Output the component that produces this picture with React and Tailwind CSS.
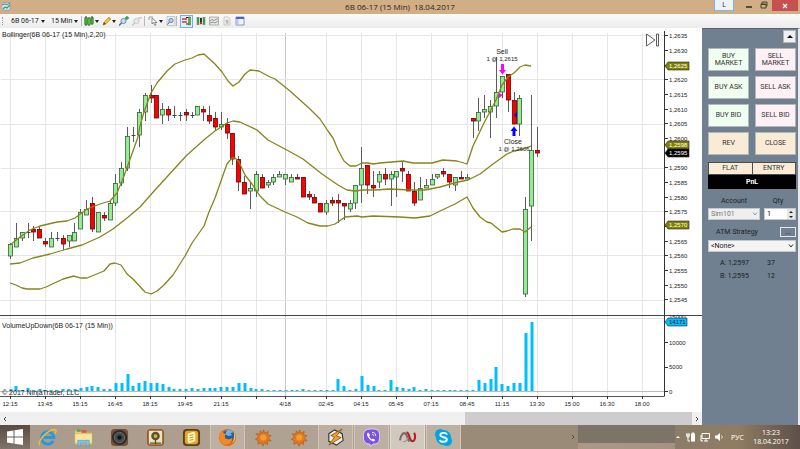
import React from "react";

// [high, body top, body bottom, low, direction] in chart units
const candles = [
  [243, 244, 256, 259, "u"], [223, 238, 247, 247, "u"], [232, 232, 238, 241, "u"], [223, 232, 232, 238, "d"],
  [226, 229, 232, 241, "d"], [226, 229, 238, 238, "d"], [238, 241, 244, 247, "d"], [232, 238, 247, 247, "u"],
  [232, 238, 238, 241, "d"], [235, 238, 244, 250, "d"], [235, 235, 241, 247, "u"], [223, 232, 241, 241, "u"],
  [209, 212, 229, 229, "u"], [200, 209, 215, 215, "u"], [197, 203, 229, 232, "d"], [212, 212, 232, 232, "u"],
  [212, 215, 218, 221, "d"], [200, 203, 220, 220, "u"], [174, 183, 203, 206, "u"], [162, 168, 183, 186, "u"],
  [127, 136, 168, 171, "u"], [127, 135, 135, 142, "d"], [109, 112, 135, 147, "u"], [93, 95, 112, 121, "u"],
  [85, 95, 98, 103, "d"], [95, 95, 118, 118, "d"], [103, 109, 115, 124, "u"], [106, 109, 115, 121, "d"],
  [106, 115, 115, 118, "d"], [112, 115, 115, 121, "d"], [109, 112, 115, 121, "d"], [112, 115, 115, 118, "d"],
  [106, 106, 115, 115, "u"], [106, 109, 112, 121, "d"], [106, 115, 121, 124, "d"], [112, 118, 127, 130, "d"],
  [112, 124, 127, 130, "u"], [118, 124, 133, 139, "d"], [133, 133, 159, 165, "d"], [156, 159, 182, 191, "d"],
  [176, 182, 194, 194, "d"], [182, 188, 191, 209, "u"], [171, 174, 191, 197, "u"], [174, 177, 188, 188, "d"],
  [180, 182, 185, 188, "u"], [174, 177, 182, 185, "u"], [171, 174, 177, 177, "u"], [174, 174, 179, 185, "u"],
  [174, 177, 182, 182, "u"], [174, 177, 179, 179, "d"], [177, 177, 197, 197, "d"], [191, 194, 197, 200, "d"],
  [194, 197, 203, 203, "d"], [203, 203, 212, 212, "d"], [200, 203, 212, 215, "u"], [197, 200, 203, 206, "d"],
  [194, 200, 203, 223, "d"], [203, 203, 206, 220, "d"], [200, 203, 209, 212, "u"], [185, 185, 203, 209, "u"],
  [147, 168, 185, 203, "u"], [165, 165, 185, 194, "d"], [171, 185, 188, 197, "d"], [171, 174, 182, 188, "u"],
  [168, 174, 179, 185, "d"], [171, 174, 179, 206, "u"], [171, 171, 177, 197, "u"], [162, 168, 171, 182, "d"],
  [171, 174, 191, 191, "d"], [182, 191, 203, 206, "d"], [177, 188, 200, 200, "u"], [179, 185, 188, 188, "u"],
  [174, 179, 185, 185, "u"], [174, 174, 177, 179, "u"], [168, 171, 174, 177, "d"], [174, 174, 182, 188, "d"],
  [177, 177, 185, 191, "u"], [171, 177, 179, 179, "d"], [174, 177, 179, 179, "u"], [118, 118, 121, 138, "d"],
  [98, 112, 121, 131, "u"], [95, 109, 112, 118, "u"], [100, 106, 112, 138, "u"], [57, 92, 106, 118, "u"],
  [76, 76, 92, 98, "u"], [74, 74, 100, 112, "d"], [92, 100, 124, 124, "d"], [95, 98, 124, 136, "u"],
  [197, 209, 294, 297, "u"], [95, 150, 206, 241, "u"], [127, 150, 153, 157, "d"],
];

const volumes = [
  2, 5, 1, 3, 1, 2, 1, 1, 1, 2, 2, 2, 3, 4, 5, 4, 2, 2, 8, 8, 17, 5, 8, 10, 8, 8, 7, 4, 2, 2, 2, 3, 2, 3, 3, 3,
  4, 4, 4, 8, 8, 3, 2, 2, 1, 1, 1, 1, 1, 1, 2, 1, 1, 1, 1, 1, 12, 5, 1, 2, 15, 6, 5, 1, 1, 11, 4, 3, 2, 4,
  1, 2, 1, 1, 1, 1, 1, 1, 1, 1, 11, 8, 12, 24, 7, 5, 8, 8, 58, 69,
];

const upperBand =
  "10,245 20,237 30,230 40,226 57,222 67,221 75,218 87,209 100,204 110,201 117,193 124,176 133,151 138,137 140,126 144,112 151,93 157,83 167,71 175,64 185,60 192,58 198,55 204,54 215,64 222,72 228,81 233,86 239,82 245,74 250,70 259,71 270,77 275,79 290,91 310,109 320,119 328,131 333,138 338,150 344,161 350,166 356,166 362,163 368,163 373,164 380,163 403,161 413,163 432,163 443,160 457,161 467,164 473,146 483,125 496,100 502,85 508,77 514,73 520,67 525,65 531,66";
const middleBand =
  "10,264 20,263 33,258 50,254 67,249 82,245 100,237 113,229 127,218 140,207 155,190 187,155 205,139 215,131 227,123 233,121 240,122 257,130 268,140 285,149 303,159 322,174 338,185 347,190 355,191 363,190 375,190 390,189 410,190 425,190 440,187 458,182 468,180 480,174 493,164 507,154 514,151 523,149 531,146";
const lowerBand =
  "10,283 16,285 22,288 27,289 40,289 46,287 63,279 74,276 81,278 87,278 104,271 110,264 115,263 121,265 127,274 133,279 145,292 151,294 157,291 164,285 173,275 185,256 192,243 204,226 209,212 215,198 222,178 227,164 232,158 235,158 239,162 245,175 252,184 260,196 268,204 285,212 297,217 308,223 320,226 328,226 335,224 345,217 357,216 362,217 373,216 400,217 415,218 430,216 440,211 455,204 467,197 473,208 480,217 487,222 491,223 502,232 507,231 513,229 520,229 525,232 531,227";

const times = [
  [10, "12:15"], [45, "13:45"], [80, "15:15"], [115, "16:45"], [150, "18:15"], [185, "19:45"], [221, "21:15"],
  [256, ""], [285, "4/18"], [326, "02:45"], [361, "04:15"], [396, "05:45"], [431, "07:15"], [467, "08:45"],
  [502, "11:15"], [537, "13:30"], [572, "15:00"], [607, "16:30"], [642, "18:00"],
];

// empty entries sit under a price tag
const prices = [
  "1,2635", "1,2630", "", "1,2620", "1,2615", "1,2610", "1,2605", "1,2600", "", "1,2590",
  "1,2585", "1,2580", "1,2575", "", "1,2565", "1,2560", "1,2555", "1,2550", "1,2545",
];

const barX = (i) => 10.5 + i * 5.855;
const priceY = (i) => 35.7 + i * 14.68;

function PriceTag({ y, fill, color, children, width = 24 }) {
  return (
    <g>
      <path d={`M665 ${y}l3-4h${width - 3}v8h-${width - 3}z`} fill={fill} stroke="#222" strokeWidth="0.6" />
      <text x="669" y={y + 2} fill={color}>{children}</text>
    </g>
  );
}

function Chart() {
  return (
    <svg viewBox="0 28 702 384" className="block w-full bg-white font-['Liberation_Sans',sans-serif] text-[6px]" fill="#222">
      <g stroke="#e6e6e6">
        {times.map(([x]) => (
          <path key={x} d={`M${x + 0.5} 33V396`} stroke={x === 285 ? "#c9c9c9" : "#e6e6e6"} />
        ))}
        {[35.5, 79.5, 124.5, 168.5, 211.5, 255.5, 300.5, 318.5].map((y) => (
          <path key={y} d={`M1 ${y}H664`} />
        ))}
      </g>
      <path d="M0 391.5H664" stroke="#bcbcbc" />

      {volumes.map((v, i) => (
        <rect key={i} x={Math.round(barX(i)) - 1.5} y={391 - v} width="3" height={v} fill="#00bfff" />
      ))}

      {candles.map(([high, top, bottom, low, dir], i) => {
        const x = Math.floor(barX(i)) + 0.5;
        return (
          <g key={i} stroke="#444">
            <path d={`M${x} ${high}V${low}`} stroke="#5c5c5c" />
            {top === bottom ? (
              <path d={`M${x - 2} ${top + 0.5}h4`} />
            ) : (
              <rect
                x={x - 2}
                y={top + 0.5}
                width="4"
                height={bottom - top - 0.5}
                fill={dir === "u" ? "#90ee90" : "#ff0000"}
                stroke={dir === "u" ? "#3c5c3c" : "#6c0000"}
                strokeWidth="0.8"
              />
            )}
          </g>
        );
      })}

      <g fill="none" stroke="#85851a" strokeWidth="1.3" strokeLinejoin="round">
        <polyline points={upperBand} />
        <polyline points={middleBand} />
        <polyline points={lowerBand} />
      </g>

      {/* executions */}
      <path d="M501 64h3v6h2l-3.5 4.500-3.5-4.500h2z" fill="#f0f" />
      <path d="M499 93l4 2-4 3z" fill="#f0f" />
      <path d="M512.500 136v-5h-2l3.500-4.500 3.500 4.500h-2v5z" fill="#00f" />
      <path d="M517 112v6l-3-3z" fill="#00f" />
      <g textAnchor="middle">
        <text x="502" y="54" className="text-[7px]">Sell</text>
        <text x="502" y="61">1 @ 1,2615</text>
        <text x="513" y="144" className="text-[7px]">Close</text>
        <text x="514" y="151">1 @ 1,2606</text>
      </g>

      <path d="M646.5 34v12l8.5-6z M656.5 34h2v12h-2z" fill="#fff" stroke="#333" strokeWidth="0.8" />

      {/* axes */}
      <g stroke="#333">
        <path d="M664.5 31V396.5" />
        <path d="M0 396.5H664" stroke="#555" />
        <path d="M0 315.5H702" stroke="#444" />
        {times.map(([x]) => (
          <path key={x} d={`M${x + 0.5} 396v3`} />
        ))}
        {prices.map((p, i) => (
          <path key={i} d={`M664 ${Math.floor(priceY(i)) + 0.5}h4`} />
        ))}
        <path d="M664 342.5h4M664 367.5h4M664 391.5h4" />
      </g>
      {times.map(([x, label]) => (
        <text key={x} x={x} y="406" textAnchor="middle">{label}</text>
      ))}
      {prices.map((p, i) => (
        <text key={i} x="669" y={Math.floor(priceY(i)) + 3}>{p}</text>
      ))}
      <text x="669" y="319">15000</text>
      <text x="669" y="345">10000</text>
      <text x="669" y="369">5000</text>
      <text x="669" y="394">0</text>

      <PriceTag y={66} fill="#808000" color="#fff">1,2625</PriceTag>
      <PriceTag y={145} fill="#808000" color="#fff">1,2598</PriceTag>
      <PriceTag y={153} fill="#000" color="#fff">1,2595</PriceTag>
      <PriceTag y={225} fill="#808000" color="#fff">1,2570</PriceTag>
      <PriceTag y={322} fill="#00bfff" color="#111" width={22}>14171</PriceTag>

      <text x="2" y="37" className="text-[7px]">Bollinger(6B 06-17 (15 Min),2,20)</text>
      <text x="2" y="328" className="text-[7px]">VolumeUpDown(6B 06-17 (15 Min))</text>
      <text x="2" y="395" className="text-[7px]">© 2017 NinjaTrader, LLC</text>
    </svg>
  );
}

function Caret() {
  return (
    <svg viewBox="0 0 4 3" className="h-[3px] w-1 shrink-0" aria-hidden="true">
      <path d="M0 0h4L2 3z" fill="#222" />
    </svg>
  );
}

function Tool({ label, active, children }) {
  return (
    <button
      type="button"
      aria-label={label}
      className={
        active
          ? "flex h-[13px] w-[13px] shrink-0 items-center justify-center border border-[#6fb0ee] bg-[#e2f0fc]"
          : "flex h-[13px] w-[10px] shrink-0 items-center justify-center"
      }
    >
      <svg viewBox="0 0 10 10" className="h-[10px] w-[10px] shrink-0">{children}</svg>
    </button>
  );
}

function Separator() {
  return <span className="h-[10px] w-px shrink-0 bg-[#b8b8b8]" />;
}

function TitleBar() {
  return (
    <header className="flex h-[14px] items-start bg-[#d1ae86]">
      <div className="flex flex-1 pt-[2px] pl-[2px]">
        <svg viewBox="0 0 9 9" className="h-[9px] w-[9px]" aria-hidden="true">
          <path d="M0 1h8v7H0z" fill="#dcebf2" stroke="#6d93b5" strokeWidth="0.6" />
          <path d="M0 3l3-1 2 1 3-2" fill="none" stroke="#3f86c4" />
          <path d="M1 7l2-2 2 1 3-3" fill="none" stroke="#3b9b51" strokeWidth="1.2" />
        </svg>
      </div>
      <h1 className="pt-px font-['Open_Sans',sans-serif] text-[8px] leading-[11px] whitespace-pre text-[#2b2520]">
        {"6B 06-17 (15 Min)  18.04.2017"}
      </h1>
      <div className="flex flex-1 items-start justify-end pr-[2px]">
        <button type="button" className="mr-[11px] h-[11px] w-5 border border-t-0 border-[#7db4e6] bg-[#eef3f8] text-[7px] leading-[9px] text-[#333]">L</button>
        <button type="button" aria-label="Minimize" className="mr-[7px] flex h-[9px] w-2 items-end justify-center pb-px">
          <span className="h-[2px] w-[6px] bg-[#57493a]" />
        </button>
        <button type="button" aria-label="Restore" className="mr-1 flex h-[10px] w-2 items-center">
          <svg viewBox="0 0 8 8" className="h-2 w-2">
            <path d="M2 3V1h5v4H6M1 3h5v4H1zM1 3.5h5" fill="none" stroke="#4c4034" />
          </svg>
        </button>
        <button type="button" aria-label="Close" className="flex h-[11px] w-[26px] items-center justify-center bg-[#c75050]">
          <svg viewBox="0 0 6 6" className="h-[6px] w-[6px]">
            <path d="M1 1l4 4M5 1L1 5" stroke="#fff" strokeWidth="1.2" />
          </svg>
        </button>
      </div>
    </header>
  );
}

function Toolbar() {
  return (
    <div className="flex h-[14px] items-center bg-linear-to-b from-[#fafafa] to-[#ececec] pl-[2px] text-[7px] text-[#222]">
      <span className="mr-2 h-2 border-l border-dotted border-[#999]" />
      <button type="button" className="mr-[6px] flex h-3 w-[34px] items-center justify-between whitespace-nowrap">
        6B 06-17 <Caret />
      </button>
      <button type="button" className="mr-[3px] flex h-3 w-[27px] items-center justify-between whitespace-nowrap">
        15 Min <Caret />
      </button>
      <Separator />
      <div className="ml-[2px] flex items-center gap-px">
        <Tool label="Chart style">
          <path d="M2 0v10M5 1v9M8 0v9" stroke="#333" />
          <path d="M.6 1.5h2.800v7H.6zM6.6 1.5h2.800v6H6.6z" fill="#3eaa2e" stroke="#245d1b" strokeWidth="0.4" />
          <path d="M3.6 2.5h2.800v6H3.6z" fill="#5fbb3a" stroke="#245d1b" strokeWidth="0.4" />
        </Tool>
        <Caret />
      </div>
      <div className="ml-[3px] flex items-center">
        <Tool label="Drawing tools">
          <path d="M1 9l1-3 5-5 2 2-5 5z" fill="#f1c232" stroke="#a87a12" strokeWidth="0.5" />
          <path d="M1 9l1-3 2 2z" fill="#6b4a1f" />
          <path d="M6 2l1-1 2 2-1 1z" fill="#e59a4d" />
        </Tool>
        <Caret />
      </div>
      <div className="mr-[2px] ml-[3px] flex items-center gap-[3px]">
        <Tool label="Zoom in">
          <circle cx="4.5" cy="5" r="2.6" fill="#bcdcf5" stroke="#5a7f9e" strokeWidth="0.8" />
          <path d="M2.5 7L0 9.5" stroke="#5d666e" strokeWidth="1.4" />
          <path d="M8 0v4M6 2h4" stroke="#1fa23a" strokeWidth="1.3" />
        </Tool>
        <Tool label="Zoom out">
          <circle cx="4.5" cy="5" r="2.6" fill="#e8e8e8" stroke="#c2c2c2" strokeWidth="0.8" />
          <path d="M2.5 7L0 9.5" stroke="#c5c5c5" strokeWidth="1.4" />
          <path d="M6 2h4" stroke="#bdbdbd" strokeWidth="1.2" />
        </Tool>
      </div>
      <Separator />
      <div className="mr-[3px] ml-[3px] flex items-center gap-px">
        <Tool label="Cursor">
          <path d="M1 1h4M1 1v3" stroke="#888" strokeWidth="0.8" />
          <path d="M4 2v6l1.5-1.5L7 9.5l1-.5-1.3-2.5H9z" fill="#fff" stroke="#666" strokeWidth="0.7" />
        </Tool>
        <Caret />
      </div>
      <Tool label="Data box">
        <path d="M1 .5h8v9H1z" fill="#eef1f4" stroke="#a6acb2" strokeWidth="0.6" />
        <circle cx="5" cy="4.5" r="2.2" fill="#a9cbe8" stroke="#58799a" strokeWidth="0.7" />
        <path d="M3.5 6L1.5 8.500" stroke="#55606b" />
      </Tool>
      <Separator />
      <div className="ml-[3px] flex items-center gap-[3px]">
        <Tool label="Chart trader" active>
          <path d="M0 3h5M0 6h5" stroke="#d33" strokeWidth="1.5" />
          <path d="M4 1.5h3M4 8h3" stroke="#222" />
          <path d="M6.5 1h2v8h-2z" fill="#53b443" stroke="#2f6a27" strokeWidth="0.5" />
        </Tool>
        <Tool label="Data series">
          <path d="M0 1h10v8H0z" fill="#cfd5cf" />
          <path d="M2 1v8M8 1v8" stroke="#333" />
          <path d="M1 2h2v5H1zM7 3h2v5H7z" fill="#2fa82f" />
          <path d="M4 2h2v5H4z" fill="#2f342f" />
          <path d="M4 6h2v2H4z" fill="#c22" />
        </Tool>
        <Tool label="Indicators">
          <path d="M.5 1h9v8h-9z" fill="#e3e7e8" stroke="#929999" strokeWidth="0.7" />
          <path d="M1 5l2-1.5 2 1 4-2" fill="none" stroke="#c66" strokeWidth="0.8" />
          <path d="M1 7l3-1 2 1 3-2" fill="none" stroke="#5a9b6b" strokeWidth="0.8" />
        </Tool>
        <Tool label="Strategies">
          <path d="M2 1h4l2 2v6H2z" fill="#eee" stroke="#bbb" strokeWidth="0.7" />
          <path d="M6.5 4.5H4v1.2h2.200V7H3.8M5 3.5v4.500" fill="none" stroke="#aaa" strokeWidth="0.7" />
        </Tool>
        <Tool label="Properties">
          <path d="M1 1h8v8H1z" fill="#f4f7ff" stroke="#6b7bc4" strokeWidth="0.8" />
          <path d="M1 1h8v2H1z" fill="#4f63c8" />
          <path d="M1 3h2.500v6H1z" fill="#b9c5ef" />
        </Tool>
      </div>
    </div>
  );
}

const tones = {
  buy: "bg-[#f0fff0]",
  sell: "bg-[#fff0f5]",
  flat: "bg-[#faebd7]",
};

function OrderButton({ tone, children }) {
  return (
    <button
      type="button"
      className={`flex h-[23px] items-center justify-center border border-[#b4b8b8] px-1 text-center leading-[7px] text-[#333] ${tones[tone]}`}
    >
      {children}
    </button>
  );
}

function Chevron({ color }) {
  return (
    <svg viewBox="0 0 6 4" className="pointer-events-none absolute top-1 right-[2px] h-1 w-[6px]" aria-hidden="true">
      <path d="M1 .5l2 2.500L5 .5" fill="none" stroke={color} />
    </svg>
  );
}

function ChartTrader() {
  return (
    <aside className="w-[98px] shrink-0 border-t border-r-2 border-t-[#59656f] border-r-[#e8eaec] bg-[#708090] pt-px pr-[2px] pl-[6px] text-[7px] text-[#1c2126]">
      <div className="flex justify-end">
        <button type="button" aria-label="Collapse" className="flex h-[13px] w-[13px] items-center justify-center border border-[#b5b5b5] bg-[#f0f0f0]">
          <svg viewBox="0 0 6 3" className="h-[3px] w-[6px]">
            <path d="M0 3h6L3 0z" fill="#111" />
          </svg>
        </button>
      </div>

      <div className="mt-[5px] grid grid-cols-2 gap-x-[6px] gap-y-[5px]">
        <OrderButton tone="buy">BUY<br />MARKET</OrderButton>
        <OrderButton tone="sell">SELL<br />MARKET</OrderButton>
        <OrderButton tone="buy">BUY ASK</OrderButton>
        <OrderButton tone="sell">SELL ASK</OrderButton>
        <OrderButton tone="buy">BUY BID</OrderButton>
        <OrderButton tone="sell">SELL BID</OrderButton>
        <OrderButton tone="flat">REV</OrderButton>
        <OrderButton tone="flat">CLOSE</OrderButton>
      </div>

      <div className="mt-[7px] flex h-[13px] border border-[#4c4c4c] bg-[#faebd7] text-[#333]">
        <button type="button" className="flex-1 border-r border-[#4c4c4c] leading-[11px]">FLAT</button>
        <button type="button" className="flex-1 leading-[11px]">ENTRY</button>
      </div>
      <div className="h-[14px] bg-black text-center leading-[14px] font-bold text-white">PnL</div>

      <div className="mt-[6px] flex gap-1 leading-[12px]">
        <label htmlFor="account" className="flex-1 text-center">Account</label>
        <label htmlFor="qty" className="w-8 pr-1 text-center">Qty</label>
      </div>
      <div className="mt-px flex gap-1">
        <div className="relative flex-1">
          <select id="account" disabled className="block h-3 w-full appearance-none border border-[#c4c8cb] bg-[#efefef] pl-[2px] leading-[10px] text-[#777] opacity-100">
            <option>Sim101</option>
          </select>
          <Chevron color="#999" />
        </div>
        <div className="flex h-3 w-8 border border-[#c4c8cb] bg-white">
          <input id="qty" type="text" defaultValue="1" className="w-0 flex-1 pl-[2px] leading-[10px] text-black" />
          <div className="flex w-2 flex-col bg-[#e6e6e6]">
            <button type="button" aria-label="Increase" className="flex flex-1 items-center justify-center">
              <svg viewBox="0 0 4 2" className="h-[2px] w-1"><path d="M0 2h4L2 0z" fill="#222" /></svg>
            </button>
            <button type="button" aria-label="Decrease" className="flex flex-1 items-center justify-center">
              <svg viewBox="0 0 4 2" className="h-[2px] w-1"><path d="M0 0h4L2 2z" fill="#222" /></svg>
            </button>
          </div>
        </div>
      </div>

      <div className="mt-[7px] flex h-[10px] items-center justify-between pl-2">
        <label htmlFor="atm">ATM Strategy</label>
        <button type="button" aria-label="Strategy properties" className="h-[10px] w-4 border border-[#e4e7ea] leading-[6px]">...</button>
      </div>
      <div className="relative mt-[3px]">
        <select id="atm" className="block h-3 w-full appearance-none border border-[#c4c8cb] bg-[#f4f4f4] pl-[2px] leading-[10px] text-[#222]">
          <option>&lt;None&gt;</option>
        </select>
        <Chevron color="#333" />
      </div>

      <dl className="mt-[5px] pl-3 leading-[13px]">
        <div className="flex">
          <dt className="w-[47px]">A: 1,2597</dt>
          <dd>37</dd>
        </div>
        <div className="flex">
          <dt className="w-[47px]">B: 1,2595</dt>
          <dd>12</dd>
        </div>
      </dl>
    </aside>
  );
}

function ScrollBar() {
  return (
    <div className="flex h-[13px] bg-[#f0f0f0] text-[#444]">
      <button type="button" aria-label="Scroll left" className="flex w-[10px] items-center justify-center">
        <svg viewBox="0 0 4 6" className="h-[6px] w-1"><path d="M3 1L1 3l2 2" fill="none" stroke="currentColor" /></svg>
      </button>
      <div className="flex flex-1 justify-end">
        <div className="w-1/3 bg-[#cdcdcd]" />
      </div>
      <button type="button" aria-label="Scroll right" className="flex w-[10px] items-center justify-center">
        <svg viewBox="0 0 4 6" className="h-[6px] w-1"><path d="M1 1l2 2-2 2" fill="none" stroke="currentColor" /></svg>
      </button>
    </div>
  );
}

function Task({ label, open, active, children }) {
  const state = active
    ? "border-x border-[#e4dcd2] bg-[#d2c9be]"
    : open
      ? "border-x border-[#cfc4b7] bg-[#bdb0a2]"
      : "";
  return (
    <button type="button" aria-label={label} className={`flex w-[35px] shrink-0 items-center justify-center ${state}`}>
      <svg viewBox="0 0 20 20" className="h-[19px] w-[19px]">{children}</svg>
    </button>
  );
}

function Star() {
  return (
    <>
      <path
        d="M10 2l1.6 3.600L15 3.500l-.8 3.800L18 8l-2.800 2.600L18 13.500l-4 .2.2 3.800-3-2.200L9.500 19l-1.800-3.500L4 17l.6-3.800L1.500 12l3-2.400L2.500 6l3.900.4L6.500 3l2.500 2.500z"
        fill="#e37a1c"
        stroke="#a94f10"
        strokeWidth="0.6"
      />
      <circle cx="9.8" cy="10" r="3.2" fill="#f39a35" />
    </>
  );
}

function Taskbar() {
  return (
    <footer className="flex h-6 bg-linear-to-r from-[#a99a8b] via-[#b3a596] to-[#9c8b74] text-white">
      <button type="button" aria-label="Start" className="flex w-[30px] shrink-0 items-center justify-center bg-linear-to-b from-[#584c43] to-[#81756b]">
        <svg viewBox="0 0 16 16" className="h-4 w-4">
          <path d="M0 2.5l6.500-1v6H0zM7.500 1.300L16 0v7.500H7.500zM0 8.500h6.500v6l-6.500-1zM7.500 8.500H16V16l-8.500-1.300z" fill="#fff" />
        </svg>
      </button>
      <div className="flex gap-px">
        <Task label="Internet Explorer">
          <path d="M16 13.5a6.500 6.500 0 1 1 .7-3.500H6" fill="none" stroke="#2599e0" strokeWidth="3" />
          <path d="M2 18C-1 15 8 3 17 1.500c3 0 2 3 .8 4.500" fill="none" stroke="#f3bd2d" strokeWidth="1.6" />
        </Task>
        <Task label="File Explorer">
          <path d="M1 3h6l1 2h11v12H1z" fill="#eacb6a" />
          <path d="M3 1.5h4V4H3z" fill="#4ea855" />
          <path d="M8 2h5v3H8z" fill="#d95b44" />
          <path d="M1 6h18v10H1z" fill="#f8e5a0" stroke="#d7b550" strokeWidth="0.6" />
          <path d="M4 19v-6h12v6h-3v-3H7v3z" fill="#7ec3e8" stroke="#4a98c6" strokeWidth="0.6" />
        </Task>
        <Task label="Sound">
          <rect x="1" y="1" width="18" height="18" rx="4" fill="#755039" />
          <circle cx="10" cy="10" r="8" fill="#2c2c2d" />
          <circle cx="10" cy="10" r="5.5" fill="#484b4e" stroke="#777" strokeWidth="0.8" />
          <circle cx="10" cy="10" r="2.3" fill="#151515" />
        </Task>
        <Task label="Photos">
          <rect x="1" y="1" width="18" height="18" rx="4" fill="#9a5c29" />
          <rect x="3" y="3" width="14" height="14" rx="1" fill="#e9e1c3" />
          <circle cx="10" cy="8.5" r="4.5" fill="#59522f" />
          <circle cx="10" cy="8.5" r="2" fill="#d7b34b" />
          <path d="M10 12v5M4 16h12" stroke="#4e5a26" strokeWidth="1.4" />
        </Task>
        <Task label="Documents">
          <rect x="1" y="1" width="18" height="18" rx="4" fill="#5a4020" />
          <rect x="3" y="3" width="14" height="14" rx="3" fill="#e8a51f" />
          <path d="M6 6l6-2 2 1v9l-6 2-2-1z" fill="#fff3c4" />
          <path d="M8 8l4-1M8 10.5l4-1M8 13l4-1" stroke="#c78a1a" />
        </Task>
        <Task label="Firefox" open>
          <circle cx="10" cy="10" r="9" fill="#e5661b" />
          <circle cx="11" cy="8.5" r="6.5" fill="#235fa8" />
          <path d="M9 2.5c3-1 6 0 7 2l-3 1 2 2-4 1-3-2z" fill="#6db5e6" />
          <path d="M1.500 5C3 4 5 4 6 5.500l3 1-2 2c0 4 5 4 8 2 0 4-3 7-7 7S0 13 1.500 5z" fill="#f28a20" />
          <path d="M17 4c2 4 2 9-2 12 2-4 2-8 2-12z" fill="#f9c43a" />
        </Task>
        <Task label="Launcher"><Star /></Task>
        <Task label="Updater"><Star /></Task>
        <Task label="Winamp" open>
          <path d="M3 6l6-4 8 4 1 7-7 5-8-4z" fill="#eee" stroke="#333" strokeWidth="1.2" />
          <path d="M17 1L5 8l4 1.500L3 18l13-8-5-1.500z" fill="#f5a021" stroke="#7c4a0b" strokeWidth="0.8" />
        </Task>
        <Task label="Viber" open>
          <path d="M10 1c7 0 8.500 2 8.500 8s-2 8-7 8l-3 2.500V17C3 16.500 1.500 14 1.500 9S3 1 10 1z" fill="#7a53e0" stroke="#e6defa" strokeWidth="0.9" />
          <path d="M6 5c-1.500 1-1 3 1 5.500s4.500 4 6 3.500l1-1.500-2.500-1.500-1 1C9 11.500 8 10 7.500 8.500l1-1L7 5z" fill="#fff" />
          <path d="M10.500 4.500c3 0 4 2 4 4M10.500 6.500c1.500 0 2 1 2 2" fill="none" stroke="#fff" strokeWidth="0.9" />
        </Task>
        <Task label="NinjaTrader" active>
          <path d="M2 13C3 7 6 4 8 6s2 7 4 8" fill="none" stroke="#7b6a62" strokeWidth="2.2" />
          <path d="M5 14c3 1 5-1 5-4" fill="none" stroke="#a59a93" strokeWidth="1.4" />
          <path d="M9 5c3-1 3 9 6 9s4-6 2-9" fill="none" stroke="#b3202b" strokeWidth="2.2" />
        </Task>
        <Task label="Skype" open>
          <circle cx="6.5" cy="6.5" r="5.5" fill="#00a5e5" />
          <circle cx="13.5" cy="13.5" r="5.5" fill="#00a5e5" />
          <circle cx="10" cy="10" r="8" fill="#00a5e5" />
          <path d="M13.500 7c-.5-2.500-6.800-2.500-6.800.3 0 3 6.800 1.800 6.800 4.900 0 3.200-6.800 3-7.200.2" fill="none" stroke="#fff" strokeWidth="2" />
        </Task>
      </div>
      <div className="flex flex-1 items-center justify-end bg-[#9a8b79] pr-[3px]">
        <svg viewBox="0 0 4 6" className="h-[6px] w-1" aria-hidden="true"><path d="M1 1l2 2-2 2" fill="none" stroke="#544b41" /></svg>
      </div>
      <div className="mb-[6px] w-[97px] shrink-0 bg-[#7d7468]" />
      <div className="flex w-[125px] shrink-0 items-center bg-linear-to-r from-[#8b7d69] via-[#8f7c62] to-[#5e5048] font-['Open_Sans',sans-serif] text-[7px] leading-[9px]">
        <div className="flex items-center gap-1 pl-px">
          <button type="button" aria-label="Show hidden icons" className="flex h-3 w-[6px] items-center">
            <svg viewBox="0 0 4 2" className="h-[2px] w-1"><path d="M0 2h4L2 0z" fill="#fff" /></svg>
          </button>
          <svg viewBox="0 0 10 10" className="h-[10px] w-[10px]" aria-label="Power">
            <path d="M5 1.5h4v8H5zM6 .5h2v1H6z" fill="#fff" />
            <path d="M0 3h4M1 1v4h2V1M2 5v4h2" fill="none" stroke="#fff" />
          </svg>
          <svg viewBox="0 0 10 10" className="h-[10px] w-[10px]" aria-label="Network">
            <path d="M2 1.5h7.500v5H2zM6 6.500V9M4 9h4M1 3v6h2" fill="none" stroke="#fff" />
          </svg>
          <svg viewBox="0 0 10 10" className="h-[10px] w-[10px]" aria-label="Volume">
            <path d="M1 3.5h2L6 1v8L3 6.500H1z" fill="#fff" />
            <path d="M7.500 3.500c1 1 1 2 0 3" fill="none" stroke="#fff" strokeWidth="0.8" />
          </svg>
        </div>
        <button type="button" className="ml-[7px] w-[13px]">РУС</button>
        <div className="flex-1 pr-[2px] text-center">
          <div>13:23</div>
          <div>18.04.2017</div>
        </div>
      </div>
    </footer>
  );
}

export default function App() {
  return (
    <div className="flex flex-col bg-white font-['Roboto',sans-serif]">
      <TitleBar />
      <Toolbar />
      <main className="flex">
        <div className="min-w-0 flex-1">
          <Chart />
          <ScrollBar />
        </div>
        <ChartTrader />
      </main>
      <Taskbar />
    </div>
  );
}
